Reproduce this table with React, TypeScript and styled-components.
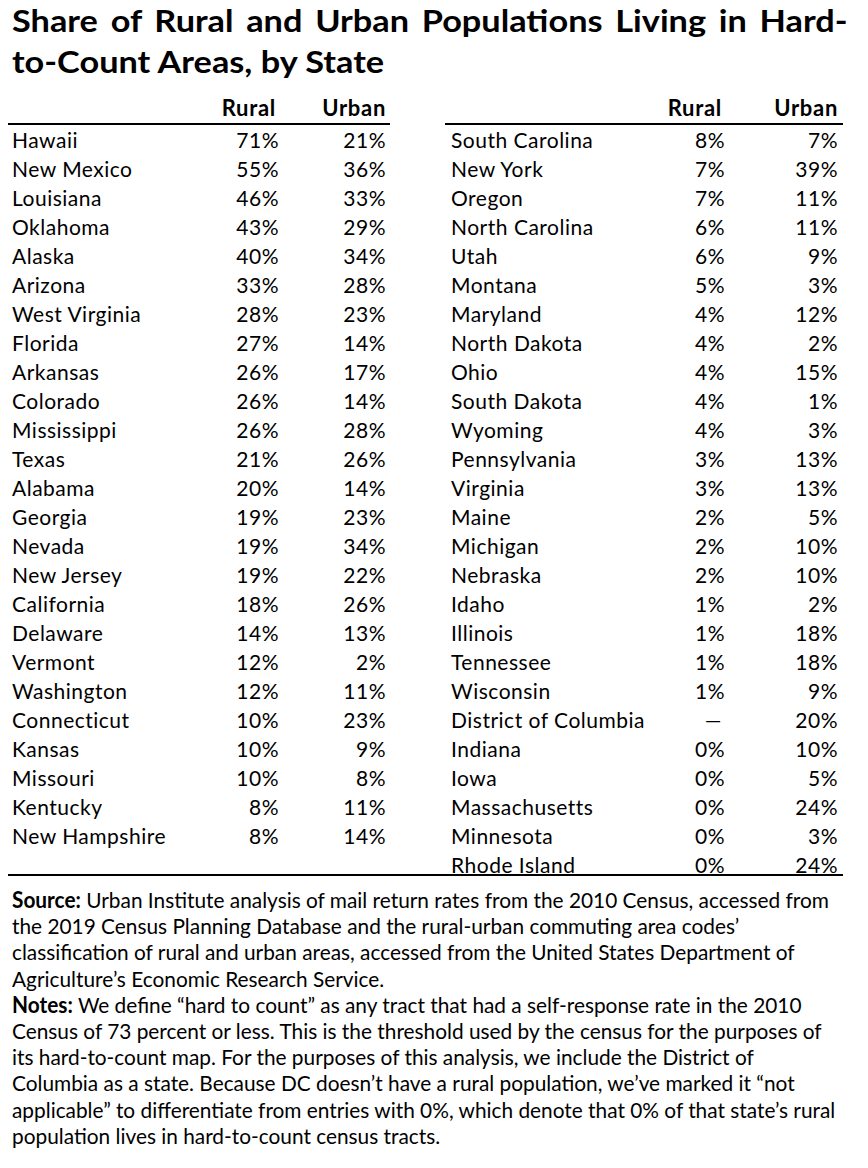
import { Fragment } from "react";
import styled, { createGlobalStyle } from "styled-components";

type Row = [string, string, string];

const leftRows: Row[] = [
  ["Hawaii", "71%", "21%"],
  ["New Mexico", "55%", "36%"],
  ["Louisiana", "46%", "33%"],
  ["Oklahoma", "43%", "29%"],
  ["Alaska", "40%", "34%"],
  ["Arizona", "33%", "28%"],
  ["West Virginia", "28%", "23%"],
  ["Florida", "27%", "14%"],
  ["Arkansas", "26%", "17%"],
  ["Colorado", "26%", "14%"],
  ["Mississippi", "26%", "28%"],
  ["Texas", "21%", "26%"],
  ["Alabama", "20%", "14%"],
  ["Georgia", "19%", "23%"],
  ["Nevada", "19%", "34%"],
  ["New Jersey", "19%", "22%"],
  ["California", "18%", "26%"],
  ["Delaware", "14%", "13%"],
  ["Vermont", "12%", "2%"],
  ["Washington", "12%", "11%"],
  ["Connecticut", "10%", "23%"],
  ["Kansas", "10%", "9%"],
  ["Missouri", "10%", "8%"],
  ["Kentucky", "8%", "11%"],
  ["New Hampshire", "8%", "14%"],
];

const rightRows: Row[] = [
  ["South Carolina", "8%", "7%"],
  ["New York", "7%", "39%"],
  ["Oregon", "7%", "11%"],
  ["North Carolina", "6%", "11%"],
  ["Utah", "6%", "9%"],
  ["Montana", "5%", "3%"],
  ["Maryland", "4%", "12%"],
  ["North Dakota", "4%", "2%"],
  ["Ohio", "4%", "15%"],
  ["South Dakota", "4%", "1%"],
  ["Wyoming", "4%", "3%"],
  ["Pennsylvania", "3%", "13%"],
  ["Virginia", "3%", "13%"],
  ["Maine", "2%", "5%"],
  ["Michigan", "2%", "10%"],
  ["Nebraska", "2%", "10%"],
  ["Idaho", "1%", "2%"],
  ["Illinois", "1%", "18%"],
  ["Tennessee", "1%", "18%"],
  ["Wisconsin", "1%", "9%"],
  ["District of Columbia", "—", "20%"],
  ["Indiana", "0%", "10%"],
  ["Iowa", "0%", "5%"],
  ["Massachusetts", "0%", "24%"],
  ["Minnesota", "0%", "3%"],
  ["Rhode Island", "0%", "24%"],
];

const GlobalStyle = createGlobalStyle`
  body {
    margin: 0;
    background: #fff;
    color: #000;
    font-family: Lato, "Open Sans", sans-serif;
  }
`;

const Page = styled.div`
  width: 868px;
  padding-left: 8px;
  box-sizing: border-box;
  overflow: hidden;
`;

const Title = styled.h1`
  margin: 0 0 0 4px;
  width: 731px;
  font-size: 30px;
  font-weight: 700;
  line-height: 41px;
  transform: scaleX(1.143);
  transform-origin: left top;
`;

const TitleLine = styled.div<{ $justify?: boolean }>`
  white-space: ${(p) => (p.$justify ? "normal" : "nowrap")};
  text-align: left;
  text-align-last: ${(p) => (p.$justify ? "justify" : "left")};
`;

const Tables = styled.div`
  display: flex;
  gap: 55px;
  margin: 11px 0 -5px;
`;

const Table = styled.div<{ $width: number }>`
  width: ${(p) => p.$width}px;
  display: flex;
  flex-direction: column;
`;

const Line = styled.div<{ $urban: number; $pl: number; $pr: number; $head?: boolean }>`
  display: grid;
  grid-template-columns: 1fr 70px ${(p) => p.$urban}px;
  padding: 0 ${(p) => p.$pr}px 0 ${(p) => p.$pl}px;
  height: ${(p) => (p.$head ? 32 : 29)}px;
  box-sizing: border-box;
  border-bottom: ${(p) => (p.$head ? "2px solid #000" : "none")};
  font-size: ${(p) => (p.$head ? 22 : 21)}px;
  font-weight: ${(p) => (p.$head ? 700 : 400)};
  letter-spacing: ${(p) => (p.$head ? 0.7 : 0.5)}px;
  line-height: ${(p) => (p.$head ? 30 : 29)}px;
`;

const Cell = styled.div<{ $right?: boolean; $inset?: number }>`
  text-align: ${(p) => (p.$right ? "right" : "left")};
  padding-right: ${(p) => p.$inset ?? 0}px;
  white-space: nowrap;
`;

const Rule = styled.div`
  width: 835px;
  height: 2px;
  background: #000;
`;

const Notes = styled.div`
  display: inline-block;
  margin: 11px 0 0 4px;
  font-size: 22px;
  line-height: 26.2px;
  white-space: nowrap;
  transform: scaleX(0.947);
  transform-origin: left top;
`;

const Label = styled.span`
  font-weight: 700;
`;

function StateTable({ rows, width, urban, pl, pr }: { rows: Row[]; width: number; urban: number; pl: number; pr: number }) {
  return (
    <Table $width={width}>
      <Line $head $urban={urban} $pl={pl} $pr={pr}>
        <Cell />
        <Cell $right $inset={3}>Rural</Cell>
        <Cell $right>Urban</Cell>
      </Line>
      {rows.map(([name, rural, urb]) => (
        <Line key={name} $urban={urban} $pl={pl} $pr={pr}>
          <Cell>{name}</Cell>
          <Cell $right $inset={rural === "—" ? 3 : 0}>{rural}</Cell>
          <Cell $right>{urb}</Cell>
        </Line>
      ))}
    </Table>
  );
}

const sourceLines = [
  "Urban Institute analysis of mail return rates from the 2010 Census, accessed from",
  "the 2019 Census Planning Database and the rural-urban commuting area codes’",
  "classification of rural and urban areas, accessed from the United States Department of",
  "Agriculture’s Economic Research Service.",
];

const noteLines = [
  "We define “hard to count” as any tract that had a self-response rate in the 2010",
  "Census of 73 percent or less. This is the threshold used by the census for the purposes of",
  "its hard-to-count map. For the purposes of this analysis, we include the District of",
  "Columbia as a state. Because DC doesn’t have a rural population, we’ve marked it “not",
  "applicable” to differentiate from entries with 0%, which denote that 0% of that state’s rural",
  "population lives in hard-to-count census tracts.",
];

export default function App() {
  return (
    <Page>
      <GlobalStyle />
      <Title>
        <TitleLine $justify>Share of Rural and Urban Populations Living in Hard-</TitleLine>
        <TitleLine>to-Count Areas, by State</TitleLine>
      </Title>
      <Tables>
        <StateTable rows={leftRows} width={382} urban={107} pl={4} pr={4} />
        <StateTable rows={rightRows} width={398} urban={113} pl={6} pr={5} />
      </Tables>
      <Rule />
      <Notes>
        <Label>Source:</Label>{" "}
        {sourceLines.map((l, i) => (
          <Fragment key={l}>
            {l}
            {i < sourceLines.length - 1 && <br />}
          </Fragment>
        ))}
        <br />
        <Label>Notes:</Label>{" "}
        {noteLines.map((l, i) => (
          <Fragment key={l}>
            {l}
            {i < noteLines.length - 1 && <br />}
          </Fragment>
        ))}
      </Notes>
    </Page>
  );
}
